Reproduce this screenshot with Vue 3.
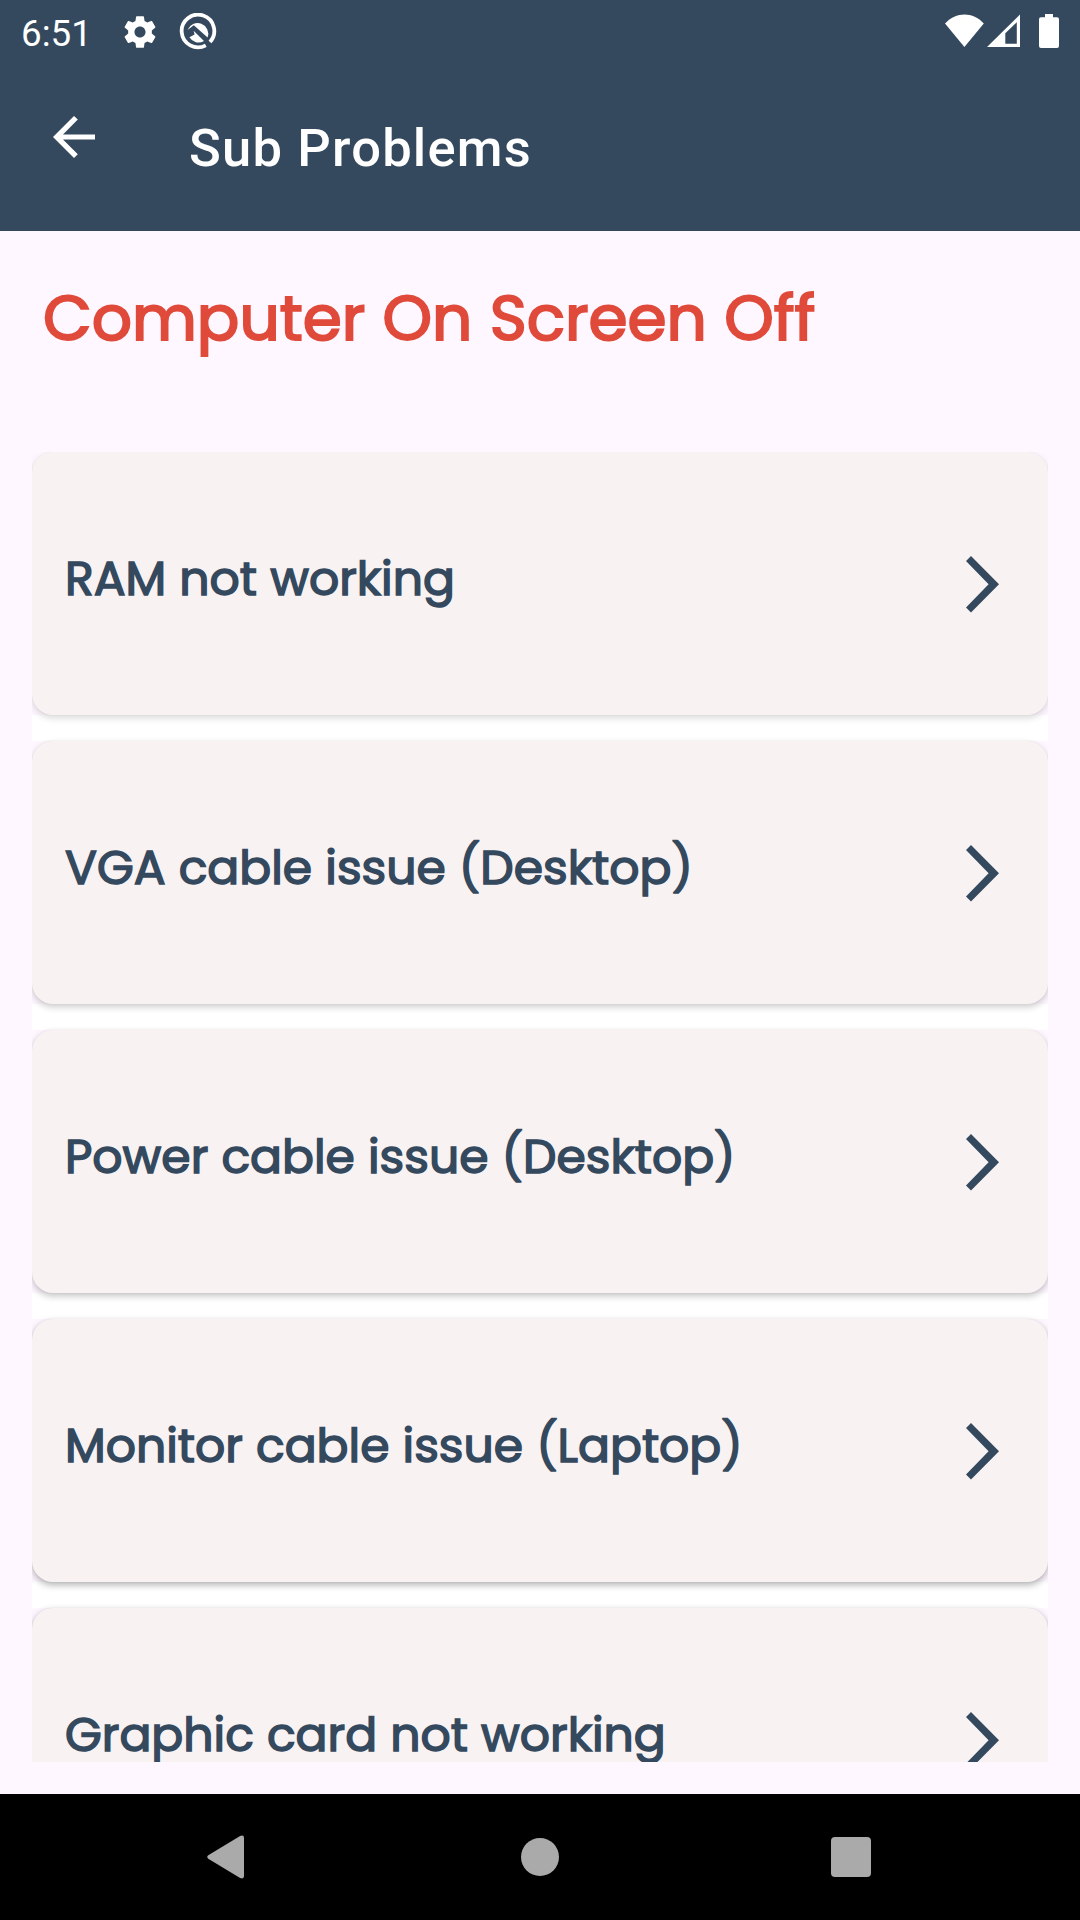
<script setup>
const problems = [
  { text: 'RAM not working', shade: 0.15 },
  { text: 'VGA cable issue (Desktop)', shade: 0.2 },
  { text: 'Power cable issue (Desktop)', shade: 0.24 },
  { text: 'Monitor cable issue (Laptop)', shade: 0.3 },
  { text: 'Graphic card not working', shade: 0.34 },
]
</script>

<template>
  <div class="screen">
    <header class="appbar">
      <div class="status">
        <span class="time">6:51</span>
        <svg class="gear" width="38" height="38" viewBox="0 0 24 24"><path fill="#fff" d="M19.43 12.98c.04-.32.07-.64.07-.98s-.03-.66-.07-.98l2.11-1.65c.19-.15.24-.42.12-.64l-2-3.46c-.12-.22-.39-.3-.61-.22l-2.49 1c-.52-.4-1.08-.73-1.69-.98l-.38-2.65C14.46 2.18 14.25 2 14 2h-4c-.25 0-.46.18-.49.42l-.38 2.65c-.61.25-1.17.59-1.69.98l-2.49-1c-.23-.09-.49 0-.61.22l-2 3.46c-.13.22-.07.49.12.64l2.11 1.65c-.04.32-.07.65-.07.98s.03.66.07.98l-2.11 1.65c-.19.15-.24.42-.12.64l2 3.46c.12.22.39.3.61.22l2.49-1c.52.4 1.08.73 1.69.98l.38 2.65c.03.24.24.42.49.42h4c.25 0 .46-.18.49-.42l.38-2.65c.61-.25 1.17-.59 1.69-.98l2.49 1c.23.09.49 0 .61-.22l2-3.46c.12-.22.07-.49-.12-.64l-2.11-1.65zM12 15.5c-1.93 0-3.5-1.57-3.5-3.5s1.57-3.5 3.5-3.5 3.5 1.57 3.5 3.5-1.57 3.5-3.5 3.5z" /></svg>
        <svg class="q" width="38" height="38" viewBox="0 0 38 38">
          <path d="M31 29A16.300 16.300 0 1 0 26.800 32.300" fill="none" stroke="#fff" stroke-width="3.800" />
          <path d="M8.500 17A10.600 10.600 0 0 1 28.600 24.600L14.800 12.300z" fill="#fff" />
          <path d="M14.600 17.800L25 28A10.600 10.600 0 0 1 10.400 24.300L15.600 21.600z" fill="#fff" />
        </svg>
        <svg class="signals" width="116" height="36" viewBox="0 0 116 36" fill="#fff">
          <path d="M0 9.6C11 -2.5 28 -2.5 38.8 9.6L19.4 33z" />
          <path fill-rule="evenodd" d="M42 33L75 .6V33zM60.3 19.2V29.7H71.8V8.3z" />
          <path d="M100 0h8v3.300h4q2 0 2 2V32q0 2-2 2H96q-2 0-2-2V5.300q0-2 2-2h4z" />
        </svg>
      </div>
      <div class="toolbar">
        <svg class="back" width="42" height="42" viewBox="0 0 42 42"><path d="M42 18.400H10L24.800 3.600 21 0 0 21 21 42 24.800 38.300 10 23.600H42z" fill="#fff" /></svg>
        <h1>Sub Problems</h1>
      </div>
    </header>

    <main>
      <h2>Computer On Screen Off</h2>
      <div class="list">
        <div v-for="p in problems" :key="p.text" class="item">
          <div class="slot">
            <div class="card" :style="{ '--shade': p.shade }">
              <span class="label">{{ p.text }}</span>
              <svg class="chevron" width="33" height="57" viewBox="0 0 33 57"><path d="M0 5.100L5 0 33 28.300 5 56.500 0 51.500 22.600 28.300z" fill="#34495e" /></svg>
            </div>
          </div>
        </div>
      </div>
    </main>

    <nav class="navbar">
      <svg width="37" height="44" viewBox="0 0 38 44" preserveAspectRatio="none"><path d="M1.300 20.300L34 1Q38 -.6 38 3V41Q38 44.600 34 43L1.300 23.700Q-.8 22 1.300 20.300z" fill="#aaa" /></svg>
      <svg class="home" width="38" height="38" viewBox="0 0 38 38"><circle cx="19" cy="19" r="19" fill="#aaa" /></svg>
      <svg width="40" height="40" viewBox="0 0 40 40"><rect width="40" height="40" rx="4" fill="#aaa" /></svg>
    </nav>
  </div>
</template>

<style>
body { margin: 0; }
</style>

<style scoped>
.screen {
  width: 1080px;
  height: 1920px;
  display: flex;
  flex-direction: column;
  overflow: hidden;
  background: #fef7ff;
}
.appbar {
  height: 231px;
  flex: none;
  background: #34495e;
  color: #fff;
  font-family: Roboto, sans-serif;
}
.status {
  height: 63px;
  display: flex;
  align-items: flex-start;
}
.time {
  width: 100px;
  margin-left: 21px;
  margin-top: 12px;
  font-size: 36.75px;
  line-height: 43px;
}
.gear { margin: 13px 0 0; }
.q { margin: 13px 0 0 20px; }
.signals { margin: 14px 19px 0 auto; }
.toolbar {
  display: flex;
  align-items: flex-start;
}
.back { margin: 53px 0 0 53px; }
h1 {
  margin: 54px 0 0 94px;
  font-size: 52.5px;
  line-height: 62px;
  font-weight: 500;
  letter-spacing: 1.2px;
}
main {
  height: 1563px;
  flex: none;
  display: flex;
  flex-direction: column;
  font-family: Poppins, "Open Sans", sans-serif;
}
h2 {
  margin: 0;
  height: 221px;
  padding-left: 43px;
  box-sizing: border-box;
  padding-top: 47px;
  font-size: 63px;
  line-height: 80px;
  font-weight: 400;
  word-spacing: 0.5px;
  -webkit-text-stroke: 2px #e04a3a;
  color: #e04a3a;
  white-space: nowrap;
}
.list {
  height: 1310px;
  margin: 0 32px;
  overflow: hidden;
}
.item {
  height: 289px;
}
.slot {
  height: 263px;
  background: #fef7ff;
  border-bottom: 26px solid #fff;
}
.card {
  height: 263px;
  display: flex;
  align-items: flex-start;
  justify-content: space-between;
  border-radius: 21px;
  background: #f8f2f2;
  box-shadow: 0 3px 7px rgba(0, 0, 0, var(--shade)), 0 0 2px rgba(0, 0, 0, 0.06);
}
.label {
  margin: 97px 0 0 33px;
  font-size: 47.25px;
  line-height: 60px;
  font-weight: 400;
  word-spacing: 0.5px;
  -webkit-text-stroke: 1.5px #34495e;
  color: #34495e;
  white-space: nowrap;
}
.chevron { margin: 104px 49px 0 0; }
.navbar {
  height: 126px;
  flex: none;
  display: flex;
  align-items: center;
  justify-content: space-between;
  padding: 0 209px 0 207px;
  box-sizing: border-box;
  background: #000;
}
.home { margin-left: 4px; }
</style>
